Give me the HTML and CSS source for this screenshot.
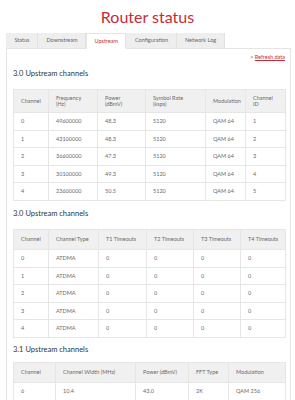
FILE: index.html
```html
<!DOCTYPE html>
<html lang="en">
<head>
<meta charset="utf-8">
<title>Router status</title>
<link rel="stylesheet" href="styles.css">
</head>
<body>
<h1 class="title">Router status</h1>
<nav class="tabs">
  <span class="tab">Status</span>
  <span class="tab">Downstream</span>
  <span class="tab active">Upstream</span>
  <span class="tab">Configuration</span>
  <span class="tab">Network Log</span>
</nav>
<section class="panel">
  <div class="refresh"><span class="chev">&gt;</span> <a href="#">Refresh data</a></div>

  <h2 class="section-title">3.0 Upstream channels</h2>
  <table class="grid t1">
    <colgroup><col><col><col><col><col><col></colgroup>
    <thead>
      <tr><th>Channel</th><th>Frequency<br>(Hz)</th><th>Power<br>(dBmV)</th><th>Symbol Rate<br>(ksps)</th><th>Modulation</th><th>Channel<br>ID</th></tr>
    </thead>
    <tbody>
      <tr><td>0</td><td>49600000</td><td>48.3</td><td>5120</td><td>QAM 64</td><td>1</td></tr>
      <tr><td>1</td><td>43100000</td><td>48.3</td><td>5120</td><td>QAM 64</td><td>2</td></tr>
      <tr><td>2</td><td>36600000</td><td>47.3</td><td>5120</td><td>QAM 64</td><td>3</td></tr>
      <tr><td>3</td><td>30100000</td><td>49.3</td><td>5120</td><td>QAM 64</td><td>4</td></tr>
      <tr><td>4</td><td>23600000</td><td>50.5</td><td>5120</td><td>QAM 64</td><td>5</td></tr>
    </tbody>
  </table>

  <h2 class="section-title">3.0 Upstream channels</h2>
  <table class="grid t2">
    <colgroup><col><col><col><col><col><col></colgroup>
    <thead>
      <tr><th>Channel</th><th>Channel Type</th><th>T1 Timeouts</th><th>T2 Timeouts</th><th>T3 Timeouts</th><th>T4 Timeouts</th></tr>
    </thead>
    <tbody>
      <tr><td>0</td><td>ATDMA</td><td>0</td><td>0</td><td>0</td><td>0</td></tr>
      <tr><td>1</td><td>ATDMA</td><td>0</td><td>0</td><td>0</td><td>0</td></tr>
      <tr><td>2</td><td>ATDMA</td><td>0</td><td>0</td><td>0</td><td>0</td></tr>
      <tr><td>3</td><td>ATDMA</td><td>0</td><td>0</td><td>0</td><td>0</td></tr>
      <tr><td>4</td><td>ATDMA</td><td>0</td><td>0</td><td>0</td><td>0</td></tr>
    </tbody>
  </table>

  <h2 class="section-title compact">3.1 Upstream channels</h2>
  <table class="grid t3">
    <colgroup><col><col><col><col><col></colgroup>
    <thead>
      <tr><th>Channel</th><th>Channel Width (MHz)</th><th>Power (dBmV)</th><th>FFT Type</th><th>Modulation</th></tr>
    </thead>
    <tbody>
      <tr><td>6</td><td>10.4</td><td>43.0</td><td>2K</td><td>QAM 256</td></tr>
    </tbody>
  </table>
</section>
</body>
</html>
```
FILE: styles.css
```css
html, body {
  margin: 0;
  padding: 0;
  background: #ffffff;
}

body {
  font-family: Lato, "Open Sans", "Liberation Sans", sans-serif;
  color: #666666;
  overflow: hidden;
}

.title {
  margin: 7px 0 0;
  text-align: center;
  font-size: 16px;
  line-height: 20px;
  font-weight: 400;
  color: #c72b36;
}

.tabs {
  display: flex;
  align-items: flex-start;
  height: 15px;
  margin: 6px 0 0 6px;
}

.tab {
  background: #eeeeee;
  padding: 0 8.5px;
  font-size: 5.5px;
  line-height: 15px;
  color: #666666;
  box-shadow: inset -1px 0 0 #e2e2e2;
  white-space: nowrap;
}

.tab.active {
  position: relative;
  z-index: 1;
  background: #ffffff;
  color: #c72b36;
  line-height: 14px;
  border: 1px solid #e4e4e4;
  border-bottom-color: #ffffff;
  padding: 0 7.5px;
  box-shadow: none;
}

.panel {
  margin: 0 4px 0 6px;
  border: 1px solid #e4e4e4;
  padding: 5px 5px 20px 6px;
}

.refresh {
  text-align: right;
  font-size: 5.5px;
  line-height: 7px;
  color: #c72b36;
}

.refresh a {
  color: #c72b36;
  text-decoration: underline;
}

.section-title {
  margin: 8px 0 11px;
  font-size: 7.5px;
  line-height: 9px;
  font-weight: 400;
  color: #333333;
}

.section-title.compact {
  margin: 7px 0 8px;
}

.grid {
  border-collapse: collapse;
  table-layout: fixed;
  width: 272px;
  font-size: 5.5px;
  color: #6a6a6a;
}

.grid th,
.grid td {
  border: 1px solid #e6e6e6;
  text-align: left;
  vertical-align: middle;
  font-weight: 400;
  padding: 5px 7px;
  line-height: 6.5px;
  white-space: nowrap;
}

.grid th {
  background: #f0f0f0;
  padding: 6.5px 7px;
}

.t1 th {
  padding: 4.5px 7px;
}

.t1 col:nth-child(1) { width: 35px; }
.t1 col:nth-child(2) { width: 49px; }
.t1 col:nth-child(3) { width: 48px; }
.t1 col:nth-child(4) { width: 60px; }
.t1 col:nth-child(5) { width: 40px; }
.t1 col:nth-child(6) { width: 40px; }

.t2 col:nth-child(1) { width: 35px; }
.t2 col:nth-child(2) { width: 50px; }
.t2 col:nth-child(3) { width: 48px; }
.t2 col:nth-child(4) { width: 47px; }
.t2 col:nth-child(5) { width: 47px; }
.t2 col:nth-child(6) { width: 45px; }

.t3 col:nth-child(1) { width: 42px; }
.t3 col:nth-child(2) { width: 80px; }
.t3 col:nth-child(3) { width: 53px; }
.t3 col:nth-child(4) { width: 40px; }
.t3 col:nth-child(5) { width: 57px; }
```
